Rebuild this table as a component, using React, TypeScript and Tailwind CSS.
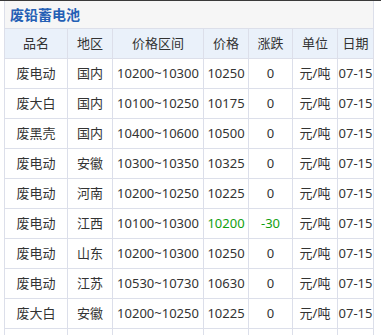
import React from 'react';

type Row = {
  name: string;
  area: string;
  range: string;
  price: string;
  change: string;
  unit: string;
  date: string;
};

const rows: Row[] = [
  { name: '废电动', area: '国内', range: '10200~10300', price: '10250', change: '0', unit: '元/吨', date: '07-15' },
  { name: '废大白', area: '国内', range: '10100~10250', price: '10175', change: '0', unit: '元/吨', date: '07-15' },
  { name: '废黑壳', area: '国内', range: '10400~10600', price: '10500', change: '0', unit: '元/吨', date: '07-15' },
  { name: '废电动', area: '安徽', range: '10300~10350', price: '10325', change: '0', unit: '元/吨', date: '07-15' },
  { name: '废电动', area: '河南', range: '10200~10250', price: '10225', change: '0', unit: '元/吨', date: '07-15' },
  { name: '废电动', area: '江西', range: '10100~10300', price: '10200', change: '-30', unit: '元/吨', date: '07-15' },
  { name: '废电动', area: '山东', range: '10200~10300', price: '10250', change: '0', unit: '元/吨', date: '07-15' },
  { name: '废电动', area: '江苏', range: '10530~10730', price: '10630', change: '0', unit: '元/吨', date: '07-15' },
  { name: '废大白', area: '安徽', range: '10200~10250', price: '10225', change: '0', unit: '元/吨', date: '07-15' },
];

const headers = ['品名', '地区', '价格区间', '价格', '涨跌', '单位', '日期'];

const cols = 'grid grid-cols-[63px_45px_91px_45px_44px_45px_36px]';
const cell = 'h-[30px] flex items-center justify-center border-r border-b border-[#dcdfea] whitespace-nowrap';

const App = () => {
  return (
    <div
      className="w-[381px] h-[335px] overflow-hidden bg-white text-[13px] text-[#333]"
      style={{ fontFamily: '"Noto Sans", "Noto Sans CJK SC", sans-serif' }}
    >
      <div className="h-px bg-[#3a3a3a]" />
      <div className="ml-[4px] w-[370px] border-l border-[#dcdfea]">
        <div className="h-[28px] flex items-center pl-[5px] bg-[#f6f6f6] border-r border-b border-[#dcdfea]">
          <span className="text-[14px] font-bold text-[#2560b5]">废铅蓄电池</span>
        </div>
        <div className={`${cols} bg-[#eaf1fa]`}>
          {headers.map((h) => (
            <div key={h} className={cell}>
              {h}
            </div>
          ))}
        </div>
        {rows.map((r, i) => {
          const down = r.change.startsWith('-');
          const color = down ? 'text-[#11a011]' : '';
          return (
            <div key={i} className={cols}>
              <div className={cell}>{r.name}</div>
              <div className={cell}>{r.area}</div>
              <div className={cell}>{r.range}</div>
              <div className={`${cell} ${color}`}>{r.price}</div>
              <div className={`${cell} ${color}`}>{r.change}</div>
              <div className={cell}>{r.unit}</div>
              <div className={cell}>{r.date}</div>
            </div>
          );
        })}
        {/* next row is below the fold, only its borders show */}
        <div className={cols}>
          {headers.map((h) => (
            <div key={h} className={cell} />
          ))}
        </div>
      </div>
    </div>
  );
};

export default App;
